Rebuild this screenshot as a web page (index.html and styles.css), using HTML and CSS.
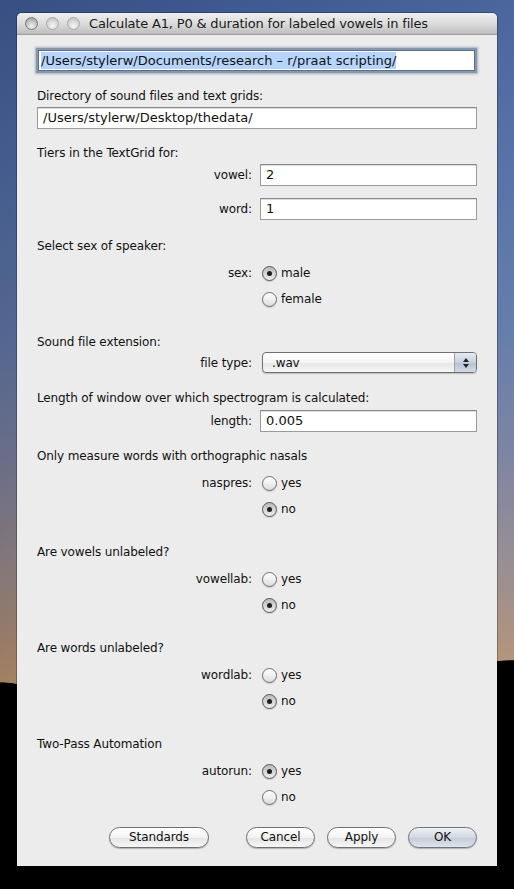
FILE: index.html
```html
<!DOCTYPE html>
<html>
<head>
<meta charset="utf-8">
<link rel="stylesheet" href="styles.css">
</head>
<body>
<div class="window">
  <div class="titlebar">
    <div class="lights">
      <span class="light light-first"></span>
      <span class="light"></span>
      <span class="light"></span>
    </div>
    <div class="title">Calculate A1, P0 &amp; duration for labeled vowels in files</div>
  </div>
  <div class="content">
    <div class="field field-focus"><span class="sel">/Users/stylerw/Documents/research – r/praat scripting/</span></div>

    <div class="label gap-a">Directory of sound files and text grids:</div>
    <div class="field field-wide">/Users/stylerw/Desktop/thedata/</div>

    <div class="label gap-b">Tiers in the TextGrid for:</div>
    <div class="row row-field first">
      <div class="rlabel">vowel:</div>
      <div class="field field-short">2</div>
    </div>
    <div class="row row-field second">
      <div class="rlabel">word:</div>
      <div class="field field-short">1</div>
    </div>

    <div class="label gap-c">Select sex of speaker:</div>
    <div class="row row-radio first-radio">
      <div class="rlabel">sex:</div>
      <div class="radio on"></div><span class="rtext">male</span>
    </div>
    <div class="row row-radio">
      <div class="rlabel"></div>
      <div class="radio"></div><span class="rtext">female</span>
    </div>

    <div class="label gap-d">Sound file extension:</div>
    <div class="row popup-row">
      <div class="rlabel">file type:</div>
      <div class="popup">
        <span class="popup-text">.wav</span>
        <span class="popup-arrows">
          <svg width="8" height="12" viewBox="0 0 8 12"><path d="M4 1 L7 5 L1 5 Z" fill="#222"/><path d="M1 7 L7 7 L4 11 Z" fill="#222"/></svg>
        </span>
      </div>
    </div>

    <div class="label gap-e">Length of window over which spectrogram is calculated:</div>
    <div class="row row-field lengthrow">
      <div class="rlabel">length:</div>
      <div class="field field-short">0.005</div>
    </div>

    <div class="label gap-b">Only measure words with orthographic nasals</div>
    <div class="row row-radio first-radio">
      <div class="rlabel">naspres:</div>
      <div class="radio"></div><span class="rtext">yes</span>
    </div>
    <div class="row row-radio">
      <div class="rlabel"></div>
      <div class="radio on"></div><span class="rtext">no</span>
    </div>

    <div class="label gap-d">Are vowels unlabeled?</div>
    <div class="row row-radio first-radio">
      <div class="rlabel">vowellab:</div>
      <div class="radio"></div><span class="rtext">yes</span>
    </div>
    <div class="row row-radio">
      <div class="rlabel"></div>
      <div class="radio on"></div><span class="rtext">no</span>
    </div>

    <div class="label gap-d">Are words unlabeled?</div>
    <div class="row row-radio first-radio">
      <div class="rlabel">wordlab:</div>
      <div class="radio"></div><span class="rtext">yes</span>
    </div>
    <div class="row row-radio">
      <div class="rlabel"></div>
      <div class="radio on"></div><span class="rtext">no</span>
    </div>

    <div class="label gap-d">Two-Pass Automation</div>
    <div class="row row-radio first-radio">
      <div class="rlabel">autorun:</div>
      <div class="radio on"></div><span class="rtext">yes</span>
    </div>
    <div class="row row-radio">
      <div class="rlabel"></div>
      <div class="radio"></div><span class="rtext">no</span>
    </div>

    <div class="buttons">
      <div class="btn btn-standards">Standards</div>
      <div class="btn btn-cancel">Cancel</div>
      <div class="btn btn-apply">Apply</div>
      <div class="btn btn-ok">OK</div>
    </div>
  </div>
</div>
</body>
</html>
```

FILE: styles.css
```css
html, body {
  margin: 0;
  padding: 0;
}
body {
  width: 514px;
  height: 889px;
  overflow: hidden;
  font-family: "DejaVu Sans", "Liberation Sans", sans-serif;
  font-size: 12px;
  color: #111;
  background:
    radial-gradient(ellipse 60px 40px at 0px 722px, #000 98%, transparent 100%),
    radial-gradient(ellipse 80px 30px at 514px 690px, #000 98%, transparent 100%),
    linear-gradient(to bottom, transparent 0, transparent 700px, #000 700px, #000 100%),
    linear-gradient(to right, rgba(20,30,60,0.18) 0%, rgba(20,30,60,0) 50%, rgba(140,170,220,0.15) 100%),
    linear-gradient(to bottom, #3f5a92 0px, #4d699f 150px, #5f76a2 330px, #7a7e9a 450px, #9a8a88 560px, #b38f70 640px, #c59a66 700px);
  padding-top: 13px;
  box-sizing: border-box;
}
.window {
  margin-left: 17px;
  width: 480px;
  background: #ececec;
  border-radius: 5px 5px 0 0;
  box-shadow: 0 0 0 1px rgba(0,0,0,0.25);
}
.titlebar {
  height: 22px;
  display: flex;
  align-items: center;
  background: linear-gradient(to bottom, #efefef 0%, #dcdcdc 50%, #bdbdbd 100%);
  border-radius: 5px 5px 0 0;
  border-bottom: 1px solid #9a9a9a;
  box-sizing: border-box;
}
.lights {
  display: flex;
  gap: 8px;
  padding-left: 8px;
}
.light {
  width: 13px;
  height: 13px;
  border-radius: 50%;
  box-sizing: border-box;
  border: 1px solid #a8a8a8;
  background: radial-gradient(circle at 50% 72%, #f6f6f6 0%, #d6d6d6 55%, #bcbcbc 100%);
}
.light-first {
  border-color: #7b7b7b;
  background: radial-gradient(circle at 50% 75%, #f0f0f0 0%, #c6c6c6 50%, #8e8e8e 100%);
}
.title {
  margin-left: 9px;
  font-size: 13px;
  letter-spacing: -0.18px;
  color: #1a1a1a;
  white-space: nowrap;
}
.content {
  padding: 0 20px 18px 20px;
  display: flex;
  flex-direction: column;
  letter-spacing: -0.12px;
}
.field {
  height: 22px;
  box-sizing: border-box;
  background: #fff;
  border: 1px solid #9a9a9a;
  border-top-color: #8a8a8a;
  box-shadow: inset 0 1px 0 #dcdcdc;
  padding: 0 5px;
  font-size: 13px;
  letter-spacing: 0;
  line-height: 20px;
  white-space: nowrap;
  overflow: hidden;
}
.field-focus {
  margin: 15px 2px 0 1px;
  height: 21px;
  line-height: 19px;
  padding: 0 2px;
  border-color: #5f6f86;
  box-shadow: 0 0 0 2px #8597b0, 0 0 2px 3px rgba(110,130,160,0.55);
}
.sel {
  background: #b6d5fd;
  padding: 1px 0;
}
.field-wide {
  margin-top: 3px;
}
.label {
  height: 16px;
  line-height: 16px;
  white-space: nowrap;
}
.gap-a { margin-top: 17px; }
.gap-b { margin-top: 16px; }
.gap-c { margin-top: 18px; }
.gap-d { margin-top: 25px; }
.gap-e { margin-top: 17px; }
.row {
  display: flex;
  align-items: center;
}
.rlabel {
  width: 215px;
  text-align: right;
  padding-right: 8px;
  flex: none;
  white-space: nowrap;
}
.row-field .field-short {
  flex: 1;
}
.first { margin-top: 3px; }
.second { margin-top: 12px; }
.lengthrow { margin-top: 4px; }
.row-radio {
  height: 20px;
  margin-top: 6px;
}
.first-radio { margin-top: 9px; }
.radio {
  width: 15px;
  height: 15px;
  border-radius: 50%;
  box-sizing: border-box;
  border: 1px solid #6e6e6e;
  background: linear-gradient(to bottom, #fdfdfd 0%, #f0f0f0 50%, #dadada 100%);
  box-shadow: 0 1px 1px rgba(0,0,0,0.15);
  margin-left: 2px;
  position: relative;
  flex: none;
}
.radio.on {
  background: linear-gradient(to bottom, #b9b9b9 0%, #d4d4d4 50%, #eeeeee 100%);
  border-color: #555;
}
.radio.on::after {
  content: "";
  position: absolute;
  left: 4px;
  top: 4px;
  width: 5px;
  height: 5px;
  border-radius: 50%;
  background: #1e1e1e;
}
.rtext {
  margin-left: 4px;
}
.popup-row {
  margin-top: 2px;
}
.popup {
  flex: 1;
  margin-left: 2px;
  height: 21px;
  box-sizing: border-box;
  border: 1px solid #707070;
  border-radius: 4px;
  background: linear-gradient(to bottom, #ffffff 0%, #f4f4f4 50%, #e6e6e6 51%, #f6f6f6 100%);
  box-shadow: 0 1px 1px rgba(0,0,0,0.2);
  display: flex;
  align-items: center;
  overflow: hidden;
}
.popup-text {
  flex: 1;
  padding-left: 9px;
}
.popup-arrows {
  width: 21px;
  height: 100%;
  display: flex;
  align-items: center;
  justify-content: center;
  border-left: 1px solid #a0a0a0;
  background: linear-gradient(to bottom, #e6ebf2 0%, #c6d0de 50%, #b5c1d2 51%, #d3dbe6 100%);
}
.buttons {
  margin-top: 20px;
  display: flex;
  align-items: center;
}
.btn {
  height: 21px;
  box-sizing: border-box;
  border: 1px solid #6f6f6f;
  border-radius: 11px;
  background: linear-gradient(to bottom, #ffffff 0%, #f3f3f3 50%, #e4e4e4 51%, #f7f7f7 100%);
  box-shadow: 0 1px 1px rgba(0,0,0,0.25);
  text-align: center;
  line-height: 19px;
  font-size: 12px;
  color: #111;
}
.btn-standards { margin-left: 72px; width: 100px; }
.btn-cancel { margin-left: 37px; width: 69px; }
.btn-apply { margin-left: 12px; width: 69px; }
.btn-ok {
  margin-left: 12px;
  width: 69px;
  border-color: #6c7585;
  background: linear-gradient(to bottom, #eef1f5 0%, #d2d8e1 50%, #c3cbd7 51%, #dfe4ea 100%);
}
```
